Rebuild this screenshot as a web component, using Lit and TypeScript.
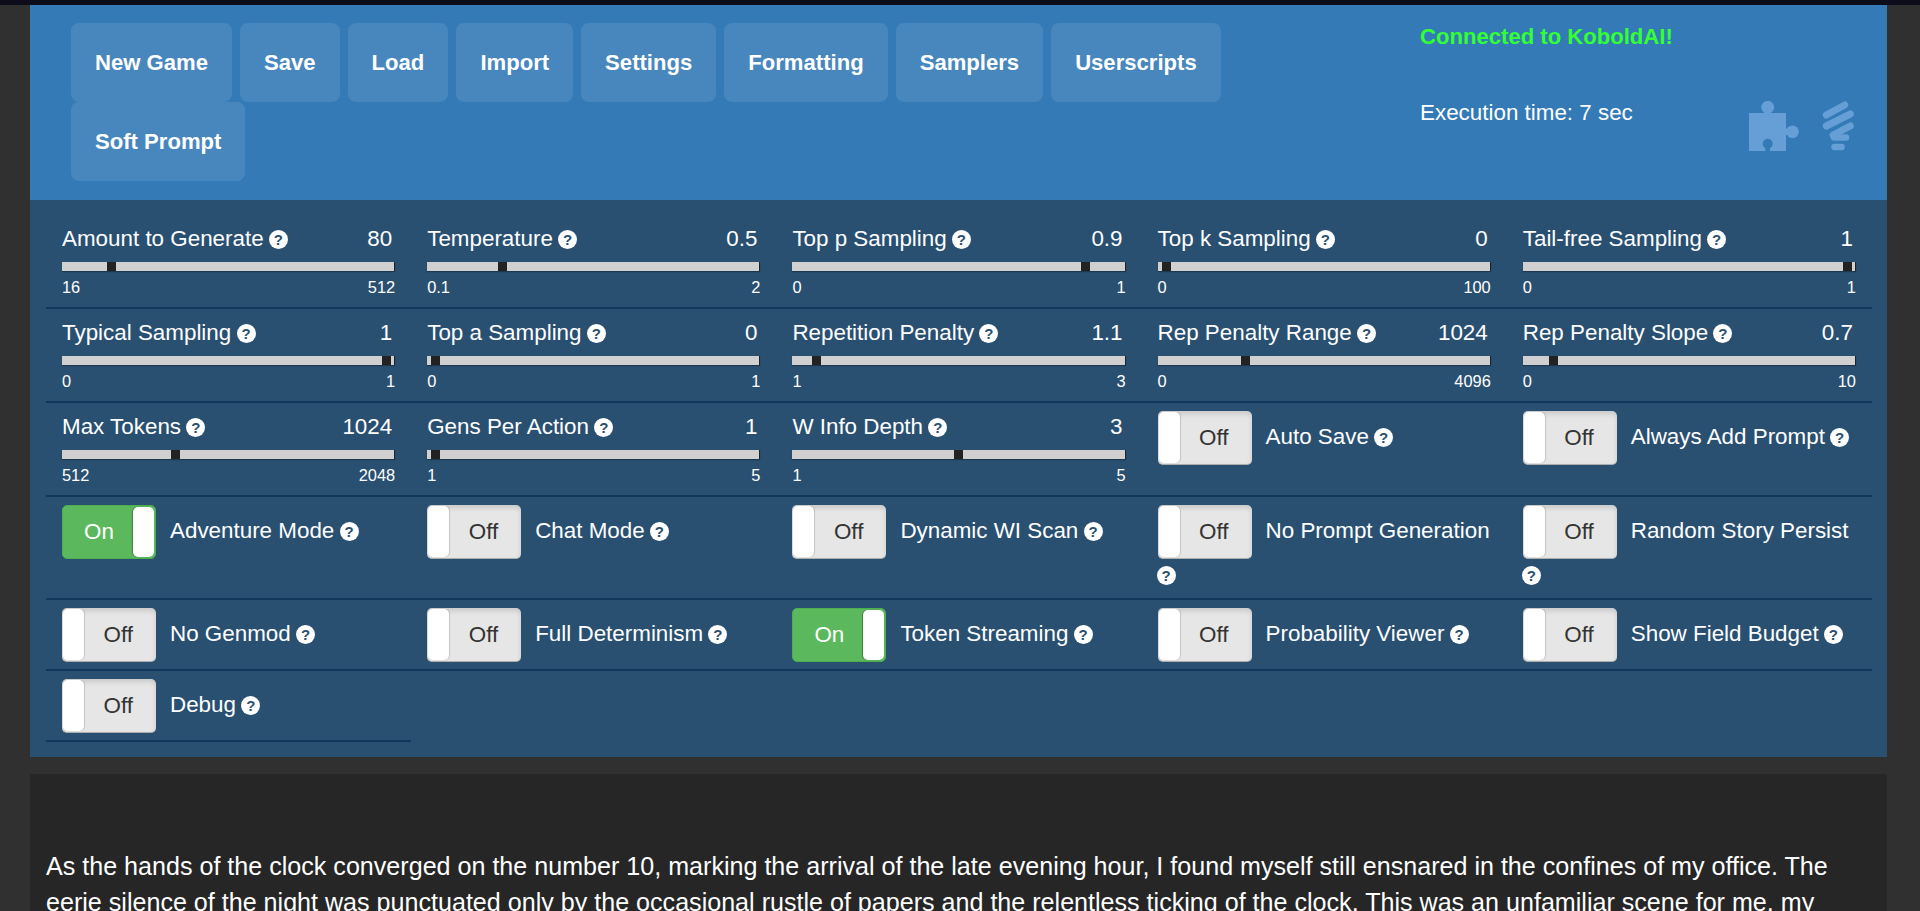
import { LitElement, html, css } from "lit";
import { customElement } from "lit/decorators.js";

type Slider = { kind: "slider"; label: string; value: string; min: number; max: number };
type Toggle = { kind: "toggle"; label: string; on?: boolean };
type Cell = Slider | Toggle;

const s = (label: string, value: string, min: number, max: number): Slider => ({ kind: "slider", label, value, min, max });
const t = (label: string, on = false): Toggle => ({ kind: "toggle", label, on });

const BUTTONS = ["New Game", "Save", "Load", "Import", "Settings", "Formatting", "Samplers", "Userscripts", "Soft Prompt"];

const CELLS: Cell[] = [
  s("Amount to Generate", "80", 16, 512),
  s("Temperature", "0.5", 0.1, 2),
  s("Top p Sampling", "0.9", 0, 1),
  s("Top k Sampling", "0", 0, 100),
  s("Tail-free Sampling", "1", 0, 1),
  s("Typical Sampling", "1", 0, 1),
  s("Top a Sampling", "0", 0, 1),
  s("Repetition Penalty", "1.1", 1, 3),
  s("Rep Penalty Range", "1024", 0, 4096),
  s("Rep Penalty Slope", "0.7", 0, 10),
  s("Max Tokens", "1024", 512, 2048),
  s("Gens Per Action", "1", 1, 5),
  s("W Info Depth", "3", 1, 5),
  t("Auto Save"),
  t("Always Add Prompt"),
  t("Adventure Mode", true),
  t("Chat Mode"),
  t("Dynamic WI Scan"),
  t("No Prompt Generation"),
  t("Random Story Persist"),
  t("No Genmod"),
  t("Full Determinism"),
  t("Token Streaming", true),
  t("Probability Viewer"),
  t("Show Field Budget"),
  t("Debug"),
];

@customElement("app-root")
export class AppRoot extends LitElement {
  static styles = css`
    :host {
      display: block;
      height: 100vh;
      overflow: hidden;
      background: #303030;
      color: #fff;
      font-family: "Liberation Sans", Arial, sans-serif;
      font-size: 22.4px;
      line-height: 32px;
    }

    .topline {
      height: 5px;
      background: #0d0c1a;
    }

    .page {
      margin: 0 33px 0 30px;
    }

    /* top bar */
    .topbar {
      display: flex;
      height: 195px;
      background: #337ab7;
    }

    .nav {
      display: flex;
      flex-wrap: wrap;
      align-content: flex-start;
      column-gap: 8px;
      width: 1240px;
      padding: 18px 0 0 41px;
      box-sizing: border-box;
    }

    .nav button {
      height: 79px;
      padding: 0 24px;
      border: 0;
      border-radius: 8px;
      background: #4787be;
      color: #fff;
      font: bold 22.1px "Liberation Sans", Arial, sans-serif;
    }

    .status {
      flex: 1;
      position: relative;
      padding: 16px 0 0 150px;
    }

    .connected {
      color: #3f3;
      font-weight: bold;
      font-size: 22.1px;
    }

    .exec {
      margin-top: 44px;
    }

    .icons {
      position: absolute;
      top: 96px;
      right: 32px;
      display: flex;
      gap: 23px;
    }

    .icons svg {
      display: block;
      fill: #659fd6;
      stroke: #659fd6;
    }

    /* settings grid */
    .settings {
      display: grid;
      grid-template-columns: repeat(5, 365.2px);
      padding: 15px 15px 15px 16px;
      background: #295071;
    }

    .cell {
      min-width: 0;
      padding: 8px 16px;
      border-bottom: 2px solid #13375a;
    }

    .cell.switch {
      padding-bottom: 7px;
    }

    .head {
      display: flex;
      justify-content: space-between;
      height: 30px;
      padding-right: 3px;
    }

    .help {
      display: inline-block;
      width: 19px;
      height: 19px;
      margin-left: -1px;
      border-radius: 50%;
      background: #fff;
      color: #295071;
      font-size: 15px;
      font-weight: bold;
      line-height: 19px;
      text-align: center;
      vertical-align: 1px;
    }

    .track {
      position: relative;
      height: 9px;
      margin-top: 9px;
      background: #d0d0d0;
      border-right: 1px solid #222;
      box-sizing: border-box;
      box-shadow: 0 1px 1px rgba(0, 0, 0, 0.3);
    }

    .thumb {
      position: absolute;
      top: 0;
      width: 9px;
      height: 9px;
      background: #222;
    }

    .range {
      display: flex;
      justify-content: space-between;
      margin-top: 4px;
      font-size: 16.4px;
      line-height: 24px;
    }

    .toggle {
      display: inline-flex;
      justify-content: flex-end;
      align-items: center;
      box-sizing: border-box;
      width: 94px;
      height: 54px;
      margin-right: 14px;
      padding-right: 23px;
      vertical-align: middle;
      position: relative;
      border-radius: 5px;
      background: #e6e6e6;
      border-bottom: 1px solid #adadad;
      color: #333;
      box-shadow: inset 0 3px 5px rgba(0, 0, 0, 0.125);
    }

    .toggle::before {
      content: "";
      position: absolute;
      top: 1px;
      bottom: 1px;
      left: 1px;
      width: 21px;
      border-radius: 5px;
      background: #fff;
      box-shadow: 1px 0 1px rgba(0, 0, 0, 0.15);
    }

    .toggle.on {
      justify-content: flex-start;
      padding: 0 0 0 21px;
      border: 1px solid #4cae4c;
      background: #5cb85c;
      color: #fff;
      box-shadow: none;
    }

    .toggle.on::before {
      top: 1px;
      bottom: 1px;
      left: auto;
      right: 1px;
      box-shadow: -1px 0 1px rgba(0, 0, 0, 0.3);
    }

    /* story */
    .story {
      height: 200px;
      margin-top: 17px;
      padding: 74px 16px 0;
      background: #262626;
      font-size: 25.1px;
      line-height: 36px;
    }

    .story p {
      margin: 0;
    }
  `;

  renderCell(c: Cell) {
    const help = html`<span class="help">?</span>`;
    if (c.kind === "toggle") {
      return html`<div class="cell switch">
        <span class="toggle ${c.on ? "on" : ""}">${c.on ? "On" : "Off"}</span>${c.label} ${help}
      </div>`;
    }
    const ratio = (parseFloat(c.value) - c.min) / (c.max - c.min);
    return html`<div class="cell">
      <div class="head">
        <span>${c.label} ${help}</span>
        <span>${c.value}</span>
      </div>
      <div class="track"><div class="thumb" style="left:${4 + ratio * 316}px"></div></div>
      <div class="range"><span>${c.min}</span><span>${c.max}</span></div>
    </div>`;
  }

  render() {
    return html`
      <div class="topline"></div>
      <div class="page">
        <div class="topbar">
          <div class="nav">${BUTTONS.map((b) => html`<button>${b}</button>`)}</div>
          <div class="status">
            <div class="connected">Connected to KoboldAI!</div>
            <div class="exec">Execution time: 7 sec</div>
            <div class="icons">
              <svg width="50" height="50" viewBox="0 0 50 50" stroke-width="0">
                <circle cx="18.7" cy="6.3" r="6.4"></circle>
                <circle cx="43.5" cy="30.7" r="6.3"></circle>
                <path d="M15.500 8H22V14H15.500Z"></path>
                <path d="M35 27.500H42V34H35Z"></path>
                <path d="M0 12H37V50H21V47.200A5 5 0 1 0 16.400 47.200V50H0Z"></path>
              </svg>
              <svg width="33" height="50" viewBox="0 0 33 50" fill="none" stroke-width="7" stroke-linecap="round">
                <path d="M4.300 14L22.700 4"></path>
                <path d="M4.300 25L28.300 13"></path>
                <path d="M11 34L28.300 25"></path>
                <path d="M12 36.500H24" stroke-width="6.500"></path>
                <path d="M12.500 46H19.500" stroke-width="6.500"></path>
              </svg>
            </div>
          </div>
        </div>
        <div class="settings">${CELLS.map((c) => this.renderCell(c))}</div>
        <div class="story">
          <p>
            As the hands of the clock converged on the number 10, marking the arrival of the late evening hour, I found
            myself still ensnared in the confines of my office. The<br />eerie silence of the night was punctuated only
            by the occasional rustle of papers and the relentless ticking of the clock. This was an unfamiliar scene for
            me, my
          </p>
        </div>
      </div>
    `;
  }
}
